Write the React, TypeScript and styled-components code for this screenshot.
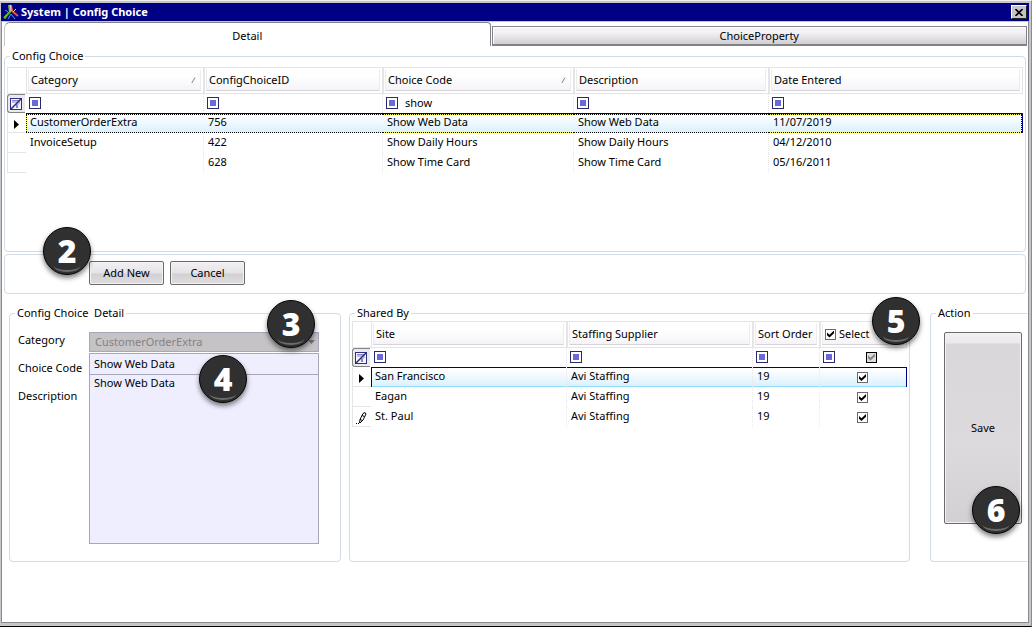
import React from "react";
import styled, { createGlobalStyle, css } from "styled-components";

const Global = createGlobalStyle`
  *, *::before, *::after { box-sizing: border-box; }
  html, body { margin: 0; background: #fff; }
  body, button, input, select, textarea {
    font-family: "Noto Sans", "Open Sans", sans-serif;
    font-size: 11px;
    line-height: 16px;
    color: #000;
  }
`;

const line = "#d3dbe5";
const navy = "#000084";

const Win = styled.div`
  display: flex;
  flex-direction: column;
  min-height: calc(100vh - 2px);
  border-top: 1px solid #efefef;
  border-right: 1px solid #8c8a91;
  border-bottom: 1px solid #000;
  background: #c6c6ca;
  padding: 2px 2px 3px 1px;
`;

const TitleBar = styled.header`
  display: flex;
  align-items: center;
  gap: 2px;
  height: 18px;
  padding: 0 2px;
  background: ${navy};
`;

const Title = styled.h1`
  flex: 1;
  margin: 0;
  font-size: 11px;
  line-height: 16px;
  font-weight: 700;
  color: #fff;
`;

const CloseButton = styled.button`
  display: grid;
  place-items: center;
  width: 16px;
  height: 14px;
  padding: 0;
  background: #c6c3c6;
  border: 1px solid;
  border-color: #fff #222 #222 #fff;
`;

const Client = styled.div`
  flex: 1;
  display: flex;
  flex-direction: column;
  border: 1px solid #8c8a91;
  border-top-color: #c6c6ca;
  background: #fff;
`;

const TabList = styled.div`
  display: flex;
  align-items: flex-end;
  gap: 1px;
  padding: 0 1px 0 2px;
`;

const Tab = styled.button<{ $active?: boolean }>`
  flex: 1;
  padding: 0;
  border: 1px solid #848289;
  ${(p) =>
    p.$active
      ? css`
          flex: 0 0 calc(50% - 25px);
          height: 24px;
          padding-top: 3px;
          background: #fff;
          border-bottom: 0;
          border-left-color: #c6c6ca;
          border-radius: 6px 4px 0 0;
        `
      : css`
          height: 20px;
          border-bottom-width: 2px;
          box-shadow: inset 1px 1px #fff;
          background: linear-gradient(#f5f2f5 30%, #d2cfd3);
        `}
`;

const Page = styled.main`
  flex: 1;
  padding: 2px 1px 0 2px;
`;

const Group = styled.fieldset`
  position: relative;
  min-width: 0;
  margin: 0;
  padding: 0;
  border: 1px solid ${line};
  border-radius: 4px;
`;

const Legend = styled.legend`
  margin-left: 5px;
  padding: 0 2px;
  line-height: 16px;
`;

const ChoiceGroup = styled(Group)`
  margin-right: 1px;
  height: 204px;
`;

const Commands = styled.section`
  position: relative;
  display: flex;
  gap: 6px;
  margin: 2px 1px 0 0;
  padding: 6px 84px 8px;
  border: 1px solid ${line};
  border-radius: 4px;
`;

const PushButton = styled.button`
  width: 75px;
  height: 24px;
  padding: 0;
  border: 1px solid #6b696b;
  border-radius: 2px;
  box-shadow: inset 0 0 0 1px #f4f2f4;
  background: linear-gradient(#f3f0f3, #e6e3e6 50%, #d3d0d3 54%, #e0dde0);
`;

const SaveButton = styled(PushButton)`
  display: block;
  width: 78px;
  height: 192px;
  margin: 11px 0 0 13px;
  background: linear-gradient(#f3f0f3, #ece9ec 10px, #d9d7da 11px, #dcdadd 60%, #d3d0d3);
`;

const Lower = styled.div`
  display: flex;
  margin: 11px 0 0 5px;
`;

const DetailGroup = styled(Group)`
  flex: 0 0 332px;
  height: 257px;
  margin-right: 8px;
`;

const SharedGroup = styled(Group)`
  flex: 1;
  height: 257px;
  margin-right: 20px;
`;

const ActionGroup = styled(Group)`
  flex: 0 0 97px;
  height: 257px;
  border-right: 0;
  border-radius: 4px 0 0 4px;
`;

const Form = styled.div`
  display: grid;
  grid-template-columns: 71px 1fr;
  padding: 11px 21px 0 8px;
`;

const Labels = styled.div`
  display: flex;
  flex-direction: column;
  gap: 12px;
`;

const Fields = styled.div`
  display: flex;
  flex-direction: column;
`;

const fieldBox = css`
  width: 100%;
  margin: 0;
  border: 1px solid #a8a6b9;
  border-radius: 0;
  background: #efeeff;
  outline: 0;
`;

const ComboWrap = styled.div`
  position: relative;
  margin-bottom: 1px;
`;

const Combo = styled.select`
  ${fieldBox}
  appearance: none;
  display: block;
  height: 20px;
  padding: 0 5px;
  background: #c6c3c6;
  color: #848284;
  opacity: 1;
`;

const ComboArrow = styled.svg`
  position: absolute;
  right: 4px;
  top: 8px;
`;

const TextBox = styled.input`
  ${fieldBox}
  height: 21px;
  padding: 0 4px 2px;
  border-bottom: 0;
`;

const TextArea = styled.textarea`
  ${fieldBox}
  display: block;
  height: 170px;
  padding: 0 4px;
  resize: none;
`;

const GridArea = styled.div<{ $top?: number }>`
  padding: ${(p) => p.$top ?? 0}px 2px 0;
`;

const Grid = styled.table`
  width: 100%;
  table-layout: fixed;
  border-collapse: separate;
  border-spacing: 0;
`;

const HeadCell = styled.th`
  height: 27px;
  padding: 1px 2px 2px;
  border: solid #e5e5e5;
  border-width: 1px 1px 1px 0;
  box-shadow: inset 1px 0 #e5e5e5;
  text-align: left;
  font-weight: 400;
`;

const HeadFace = styled.span`
  display: flex;
  align-items: center;
  gap: 3px;
  height: 22px;
  padding: 0 4px 0 2px;
  border: 1px solid #ececee;
  border-top-color: #fff;
  border-bottom-color: #d6d4d8;
  background: linear-gradient(#fff 30%, #f5f3f7);
  white-space: nowrap;
`;

const HeadText = styled.span`
  flex: 1;
`;

const FilterCell = styled.td`
  height: 19px;
  padding: 0 3px;
  vertical-align: top;
  border-right: 1px dotted #e4e4e4;
  &:last-child { border-right: 0; }
`;

const FilterLine = styled.div`
  display: flex;
  align-items: center;
  gap: 6px;
  height: 18px;
`;

const Operator = styled.button`
  flex: none;
  width: 12px;
  height: 12px;
  padding: 0;
  border: 1px solid #29296b;
  background: #6b69d6;
  box-shadow: inset 0 0 0 2px #fff;
`;

const FilterInput = styled.input`
  flex: 1;
  min-width: 0;
  height: 18px;
  padding: 0 1px 2px;
  border: 0;
  background: transparent;
  outline: 0;
`;

const Selector = styled.td`
  height: 20px;
  padding: 0;
  border: solid #e5e5e5;
  border-width: 0 0 1px 1px;
`;

const Corner = styled.td`
  padding: 0;
  border: solid #e5e5e5;
  border-width: 1px 0 1px 1px;
`;

const PlainCell = styled.td`
  padding: 0;
`;

const ClearFilter = styled.button`
  display: grid;
  place-items: center;
  width: 18px;
  height: 19px;
  padding: 0 1px 0 0;
  border: 1px solid #848284;
  border-right: 0;
  border-radius: 3px 0 0 3px;
  background: #ebe9ef;
`;

const Mark = styled.svg`
  display: block;
  margin: 3px 0 0 5px;
`;

const PencilMark = styled(Mark)`
  margin-left: 3px;
`;

const dots = "linear-gradient(90deg, #000 50%, #ffff63 50%)";
const vdots = "linear-gradient(#000 50%, #ffff63 50%)";
const glow = "linear-gradient(#fff 10%, #d9f0fd)";
const topRule = `linear-gradient(${navy}, ${navy}) 0 0 / 100% 1px no-repeat border-box`;
const focusRules = `${topRule}, ${dots} 0 1px / 2px 1px repeat-x border-box, ${dots} 0 100% / 2px 1px repeat-x border-box`;

const Cell = styled.td`
  height: 20px;
  padding: 0 4px;
  vertical-align: top;
  line-height: 18px;
  white-space: nowrap;
  border-right: 1px dotted #e9e9e9;
  &:last-child { border-right: 0; }
`;

const Row = styled.tr<{ $mode?: "focus" | "selected" }>`
  ${(p) =>
    p.$mode === "selected" &&
    css`
      ${Cell} {
        background: ${topRule},
          linear-gradient(#94dbf7, #94dbf7) 0 100% / 100% 1px no-repeat border-box, ${glow};
      }
      ${Cell}:nth-child(2) { box-shadow: inset 1px 0 ${navy}; }
      ${Cell}:last-child { box-shadow: inset -1px 0 ${navy}; }
    `}
  ${(p) =>
    p.$mode === "focus" &&
    css`
      ${Cell} {
        background: ${focusRules}, ${glow};
        border-right-color: transparent;
      }
      ${Cell}:nth-child(2) {
        background: ${focusRules}, ${vdots} 0 0 / 1px 2px repeat-y, ${glow};
      }
      ${Cell}:last-child {
        background: ${focusRules}, ${vdots} 100% 0 / 2px 2px repeat-y, ${glow};
        box-shadow: inset -1px 0 ${navy};
      }
    `}
`;

const Check = styled.input<{ $mixed?: boolean }>`
  appearance: none;
  display: block;
  flex: none;
  width: 11px;
  height: 11px;
  margin: 0;
  border: 1px solid ${(p) => (p.$mixed ? "#000" : "#6b696b")};
  background: ${(p) => (p.$mixed ? "#dcdcdc" : "#fff")};
  &:checked::after {
    content: "";
    display: block;
    width: 7px;
    height: 7px;
    margin: 1px;
    background: ${(p) => (p.$mixed ? "#848284" : "#000")};
    clip-path: polygon(0 29%, 36% 62%, 100% 0, 100% 38%, 36% 100%, 0 67%);
  }
`;

const CheckSlot = styled.div`
  display: flex;
  justify-content: center;
  padding: 5px 2px 0 0;
`;

const SelectLabel = styled.label`
  display: flex;
  align-items: center;
  gap: 3px;
`;

const MixedSlot = styled.div`
  flex: 1;
  display: flex;
  padding-left: 25px;
`;

const Badge = styled.span<{ $x: number; $y: number }>`
  position: absolute;
  left: ${(p) => p.$x}px;
  top: ${(p) => p.$y}px;
  z-index: 2;
  width: 48px;
  height: 48px;
  border: 1px solid #050505;
  border-radius: 50%;
  background: #303030;
  box-shadow: 0 3px 5px rgba(0, 0, 0, 0.5);
  color: #fff;
  font-family: "Open Sans", sans-serif;
  font-size: 32px;
  line-height: 46px;
  font-weight: 800;
  text-align: center;
  pointer-events: none;
  &::after {
    content: "";
    position: absolute;
    left: 10px;
    right: 10px;
    bottom: 2px;
    height: 12px;
    border-bottom: 2px solid #6c6c6c;
    border-radius: 50%;
  }
`;

const Logo = () => (
  <svg width="16" height="16" viewBox="0 0 16 16" aria-hidden="true">
    <path d="M6 1 L7 8 L1 14" stroke="#7bc618" strokeWidth="2" fill="none" />
    <path d="M7 8 L2 15" stroke="#31a531" strokeWidth="1" />
    <path d="M8 1 L9 7 L15 12" stroke="#f7522a" strokeWidth="2" fill="none" />
    <path d="M7.5 1 L8 7" stroke="#e7e7ef" strokeWidth="1" />
    <path d="M2 6 L5 8 M5 15 L8 10 L12 15" stroke="#4aa5de" strokeWidth="1" fill="none" />
    <path d="M13 5 L10 8" stroke="#c6d6ef" strokeWidth="1" />
  </svg>
);

const ClearIcon = () => (
  <svg width="12" height="12" viewBox="0 0 12 12" aria-hidden="true">
    <rect x="0.5" y="0.5" width="11" height="11" fill="#f4f4ff" stroke="#31317b" />
    <path d="M2 2.5 H10 M2 4 H10 M6.5 5 V10 M9.5 5 L7.5 7 V10" stroke="#8482d6" fill="none" />
    <path d="M1 11 L11 1" stroke="#29296b" strokeWidth="1.5" />
  </svg>
);

const SortIcon = () => (
  <svg width="5" height="6" viewBox="0 0 5 6" aria-hidden="true">
    <path d="M0.8 6 L4 0.5" stroke="#848284" fill="none" />
  </svg>
);

const Arrow = () => (
  <Mark width="7" height="9" viewBox="0 0 7 9" aria-hidden="true">
    <path d="M1 0 L6 4.5 L1 9 Z" />
  </Mark>
);

const Pencil = () => (
  <PencilMark width="11" height="12" viewBox="0 0 11 12" aria-hidden="true">
    <path d="M0 11h1v1H0z M2 11h1v1H2z" />
    <path
      d="M3.5 11 L4 7.5 L7 1.5 L9 0.5 L10 2 L7 8 L4 11 M4 7.5 L6.5 8.5 M6 3.5 L8.5 4.5"
      fill="#fff"
      stroke="#000"
    />
  </PencilMark>
);

interface Column {
  name: string;
  width?: number;
  sorted?: boolean;
  filter?: string;
}

const choiceColumns: Column[] = [
  { name: "Category", width: 178, sorted: true },
  { name: "ConfigChoiceID", width: 179 },
  { name: "Choice Code", width: 191, sorted: true, filter: "show" },
  { name: "Description", width: 195 },
  { name: "Date Entered" },
];

const choices = [
  ["CustomerOrderExtra", "756", "Show Web Data", "Show Web Data", "11/07/2019"],
  ["InvoiceSetup", "422", "Show Daily Hours", "Show Daily Hours", "04/12/2010"],
  ["", "628", "Show Time Card", "Show Time Card", "05/16/2011"],
];

const siteColumns: Column[] = [
  { name: "Site" },
  { name: "Staffing Supplier", width: 186 },
  { name: "Sort Order", width: 67 },
];

const sites = [
  ["San Francisco", "Avi Staffing", "19"],
  ["Eagan", "Avi Staffing", "19"],
  ["St. Paul", "Avi Staffing", "19"],
];

const HeaderCells = ({ columns }: { columns: Column[] }) => (
  <>
    {columns.map((c) => (
      <HeadCell key={c.name} scope="col">
        <HeadFace>
          <HeadText>{c.name}</HeadText>
          {c.sorted && <SortIcon />}
        </HeadFace>
      </HeadCell>
    ))}
  </>
);

const FilterCells = ({ columns }: { columns: Column[] }) => (
  <>
    <PlainCell>
      <ClearFilter type="button" aria-label="Clear filters">
        <ClearIcon />
      </ClearFilter>
    </PlainCell>
    {columns.map((c) => (
      <FilterCell key={c.name}>
        <FilterLine>
          <Operator type="button" aria-label={`${c.name} filter operator`} />
          <FilterInput aria-label={`Filter ${c.name}`} defaultValue={c.filter ?? ""} />
        </FilterLine>
      </FilterCell>
    ))}
  </>
);

const ChoiceTable = () => (
  <Grid>
    <colgroup>
      <col width={19} />
      {choiceColumns.map((c) => (
        <col key={c.name} width={c.width} />
      ))}
    </colgroup>
    <thead>
      <tr>
        <Corner />
        <HeaderCells columns={choiceColumns} />
      </tr>
    </thead>
    <tbody>
      <tr>
        <FilterCells columns={choiceColumns} />
      </tr>
      {choices.map((row, i) => (
        <Row key={row[1]} $mode={i === 0 ? "focus" : undefined}>
          <Selector>{i === 0 && <Arrow />}</Selector>
          {row.map((value, j) => (
            <Cell key={j}>{value}</Cell>
          ))}
        </Row>
      ))}
    </tbody>
  </Grid>
);

const SiteTable = () => (
  <Grid>
    <colgroup>
      <col width={19} />
      {siteColumns.map((c) => (
        <col key={c.name} width={c.width} />
      ))}
      <col width={87} />
    </colgroup>
    <thead>
      <tr>
        <Corner />
        <HeaderCells columns={siteColumns} />
        <HeadCell scope="col">
          <HeadFace>
            <SelectLabel>
              <Check type="checkbox" defaultChecked />
              Select
            </SelectLabel>
          </HeadFace>
        </HeadCell>
      </tr>
    </thead>
    <tbody>
      <tr>
        <FilterCells columns={siteColumns} />
        <FilterCell>
          <FilterLine>
            <Operator type="button" aria-label="Select filter operator" />
            <MixedSlot>
              <Check type="checkbox" defaultChecked $mixed aria-label="Filter Select" />
            </MixedSlot>
          </FilterLine>
        </FilterCell>
      </tr>
      {sites.map((row, i) => (
        <Row key={row[0]} $mode={i === 0 ? "selected" : undefined}>
          <Selector>
            {i === 0 && <Arrow />}
            {i === 2 && <Pencil />}
          </Selector>
          {row.map((value, j) => (
            <Cell key={j}>{value}</Cell>
          ))}
          <Cell>
            <CheckSlot>
              <Check type="checkbox" defaultChecked aria-label={`Select ${row[0]}`} />
            </CheckSlot>
          </Cell>
        </Row>
      ))}
    </tbody>
  </Grid>
);

export default function App() {
  return (
    <>
      <Global />
      <Win>
        <TitleBar>
          <Logo />
          <Title>System | Config Choice</Title>
          <CloseButton type="button" aria-label="Close">
            <svg width="8" height="7" viewBox="0 0 8 7" aria-hidden="true">
              <path d="M0.5 0 L7.5 7 M7.5 0 L0.5 7" stroke="#000" strokeWidth="1.6" />
            </svg>
          </CloseButton>
        </TitleBar>
        <Client>
          <TabList role="tablist">
            <Tab type="button" role="tab" aria-selected="true" $active>
              Detail
            </Tab>
            <Tab type="button" role="tab" aria-selected="false">
              ChoiceProperty
            </Tab>
          </TabList>
          <Page>
            <ChoiceGroup>
              <Legend>Config Choice</Legend>
              <GridArea $top={3}>
                <ChoiceTable />
              </GridArea>
            </ChoiceGroup>
            <Commands>
              <PushButton type="button">Add New</PushButton>
              <PushButton type="button">Cancel</PushButton>
              <Badge $x={38} $y={-28}>2</Badge>
            </Commands>
            <Lower>
              <DetailGroup>
                <Legend>Config Choice&nbsp; Detail</Legend>
                <Form>
                  <Labels>
                    <label htmlFor="category">Category</label>
                    <label htmlFor="code">Choice Code</label>
                    <label htmlFor="description">Description</label>
                  </Labels>
                  <Fields>
                    <ComboWrap>
                      <Combo id="category" disabled defaultValue="CustomerOrderExtra">
                        <option>CustomerOrderExtra</option>
                      </Combo>
                      <ComboArrow width="7" height="4" viewBox="0 0 7 4" aria-hidden="true">
                        <path d="M0 0 H7 L3.5 4 Z" fill="#7b797b" />
                      </ComboArrow>
                    </ComboWrap>
                    <TextBox id="code" defaultValue="Show Web Data" />
                    <TextArea id="description" defaultValue="Show Web Data" />
                  </Fields>
                </Form>
                <Badge $x={257} $y={-21}>3</Badge>
                <Badge $x={189} $y={34}>4</Badge>
              </DetailGroup>
              <SharedGroup>
                <Legend>Shared By</Legend>
                <GridArea>
                  <SiteTable />
                </GridArea>
                <Badge $x={522} $y={-24}>5</Badge>
              </SharedGroup>
              <ActionGroup>
                <Legend>Action</Legend>
                <SaveButton type="button">Save</SaveButton>
                <Badge $x={41} $y={165}>6</Badge>
              </ActionGroup>
            </Lower>
          </Page>
        </Client>
      </Win>
    </>
  );
}
